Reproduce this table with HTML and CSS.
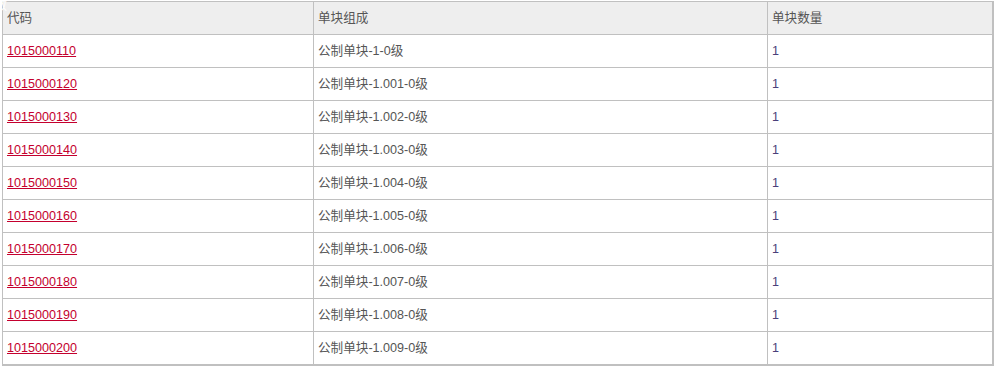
FILE: index.html
```html
<!DOCTYPE html>
<html lang="zh">
<head>
<meta charset="utf-8">
<link rel="stylesheet" href="styles.css">
</head>
<body>
<div class="wrap">
<span class="stray">数</span>
<table class="grid">
<colgroup><col class="c1"><col class="c2"><col class="c3"></colgroup>
<thead>
<tr><th>代码</th><th>单块组成</th><th>单块数量</th></tr>
</thead>
<tbody>
<tr><td><a href="#">1015000110</a></td><td>公制单块-1-0级</td><td class="num">1</td></tr>
<tr><td><a href="#">1015000120</a></td><td>公制单块-1.001-0级</td><td class="num">1</td></tr>
<tr><td><a href="#">1015000130</a></td><td>公制单块-1.002-0级</td><td class="num">1</td></tr>
<tr><td><a href="#">1015000140</a></td><td>公制单块-1.003-0级</td><td class="num">1</td></tr>
<tr><td><a href="#">1015000150</a></td><td>公制单块-1.004-0级</td><td class="num">1</td></tr>
<tr><td><a href="#">1015000160</a></td><td>公制单块-1.005-0级</td><td class="num">1</td></tr>
<tr><td><a href="#">1015000170</a></td><td>公制单块-1.006-0级</td><td class="num">1</td></tr>
<tr><td><a href="#">1015000180</a></td><td>公制单块-1.007-0级</td><td class="num">1</td></tr>
<tr><td><a href="#">1015000190</a></td><td>公制单块-1.008-0级</td><td class="num">1</td></tr>
<tr><td><a href="#">1015000200</a></td><td>公制单块-1.009-0级</td><td class="num">1</td></tr>
</tbody>
</table>
</div>
</body>
</html>
```
FILE: styles.css
```css
html, body {
  margin: 0;
  padding: 0;
  background: #ffffff;
}
body {
  font-family: "Liberation Sans", Arial, "Noto Sans CJK SC", sans-serif;
  font-size: 12.6px;
  color: #555555;
}
.wrap {
  position: relative;
  padding: 1px 0 0 2px;
}
.stray {
  position: absolute;
  left: -5px;
  top: -2px;
  color: #ffffff;
  font-family: "Noto Sans CJK SC", sans-serif;
  font-size: 12px;
  line-height: 14px;
  z-index: 2;
}
.grid {
  border-collapse: collapse;
  width: 990px;
  table-layout: fixed;
  border-right: 2px solid #c0c0c0;
  border-bottom: 2px solid #c0c0c0;
}
.c1 { width: 311px; }
.c2 { width: 454px; }
.c3 { width: 225px; }
.grid th,
.grid td {
  border: 1px solid #c0c0c0;
  height: 32px;
  padding: 0 0 0 4px;
  text-align: left;
  vertical-align: middle;
  font-weight: normal;
  line-height: 14px;
}
.grid th {
  background: #eeeeee;
  color: #555555;
}
.grid td {
  color: #555555;
}
.grid a {
  color: #c4002e;
  text-decoration: underline;
}
.grid td.num {
  color: #4a3f7a;
}
```
